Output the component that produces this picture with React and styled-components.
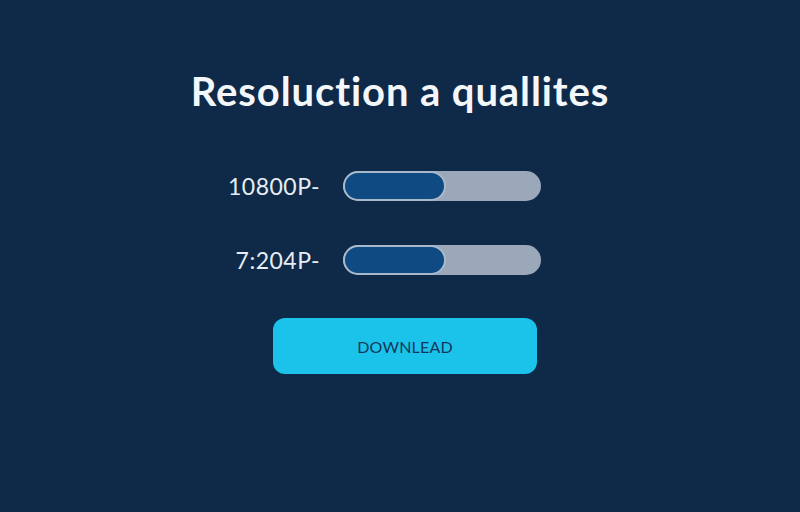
import styled, { createGlobalStyle } from 'styled-components';

const GlobalStyle = createGlobalStyle`
  html, body {
    margin: 0;
    padding: 0;
    background: #0f2a48;
  }
  body {
    font-family: 'Lato', 'Liberation Sans', sans-serif;
  }
`;

const qualities = [
  { label: '10800P-', value: 52 },
  { label: '7:204P-', value: 52 },
];

function App() {
  return (
    <>
      <GlobalStyle />
      <Page>
        <Title>Resoluction a quallites</Title>
        <Rows>
          {qualities.map(q => (
            <Row key={q.label}>
              <Label>{q.label}</Label>
              <Track>
                <Fill style={{ width: `${q.value}%` }} />
              </Track>
            </Row>
          ))}
        </Rows>
        <DownloadButton>DOWNLEAD</DownloadButton>
      </Page>
    </>
  );
}
export default App;

const Page = styled.main`
  width: 800px;
  height: 512px;
  box-sizing: border-box;
  padding-top: 66px;
  display: flex;
  flex-direction: column;
  align-items: center;
  background: #0f2a48;
`;

const Title = styled.h1`
  margin: 0;
  font-family: 'Lato', sans-serif;
  font-weight: 700;
  font-size: 40px;
  line-height: 50px;
  color: #f4f7fa;
  letter-spacing: 0.9px;
`;

const Rows = styled.div`
  margin-top: 55px;
  padding-right: 39px;
  display: flex;
  flex-direction: column;
  gap: 44px;
`;

const Row = styled.div`
  display: flex;
  align-items: center;
  gap: 23px;
`;

const Label = styled.span`
  width: 100px;
  text-align: right;
  font-family: 'Lato', sans-serif;
  font-size: 23px;
  letter-spacing: 0.5px;
  color: #e8edf3;
`;

const Track = styled.div`
  width: 198px;
  height: 30px;
  box-sizing: border-box;
  border-radius: 15px;
  background: #9aa8b9;
  overflow: hidden;
  display: flex;
`;

const Fill = styled.div`
  height: 100%;
  box-sizing: border-box;
  border: 2px solid #a9b9cc;
  border-radius: 15px;
  background: #0f4a82;
`;

const DownloadButton = styled.button`
  margin-top: 43px;
  margin-left: 10px;
  width: 264px;
  height: 56px;
  border: none;
  border-radius: 12px;
  background: #1bc3eb;
  color: #14365a;
  font-family: 'Lato', sans-serif;
  font-size: 16px;
  letter-spacing: 0.2px;
  cursor: pointer;
`;
